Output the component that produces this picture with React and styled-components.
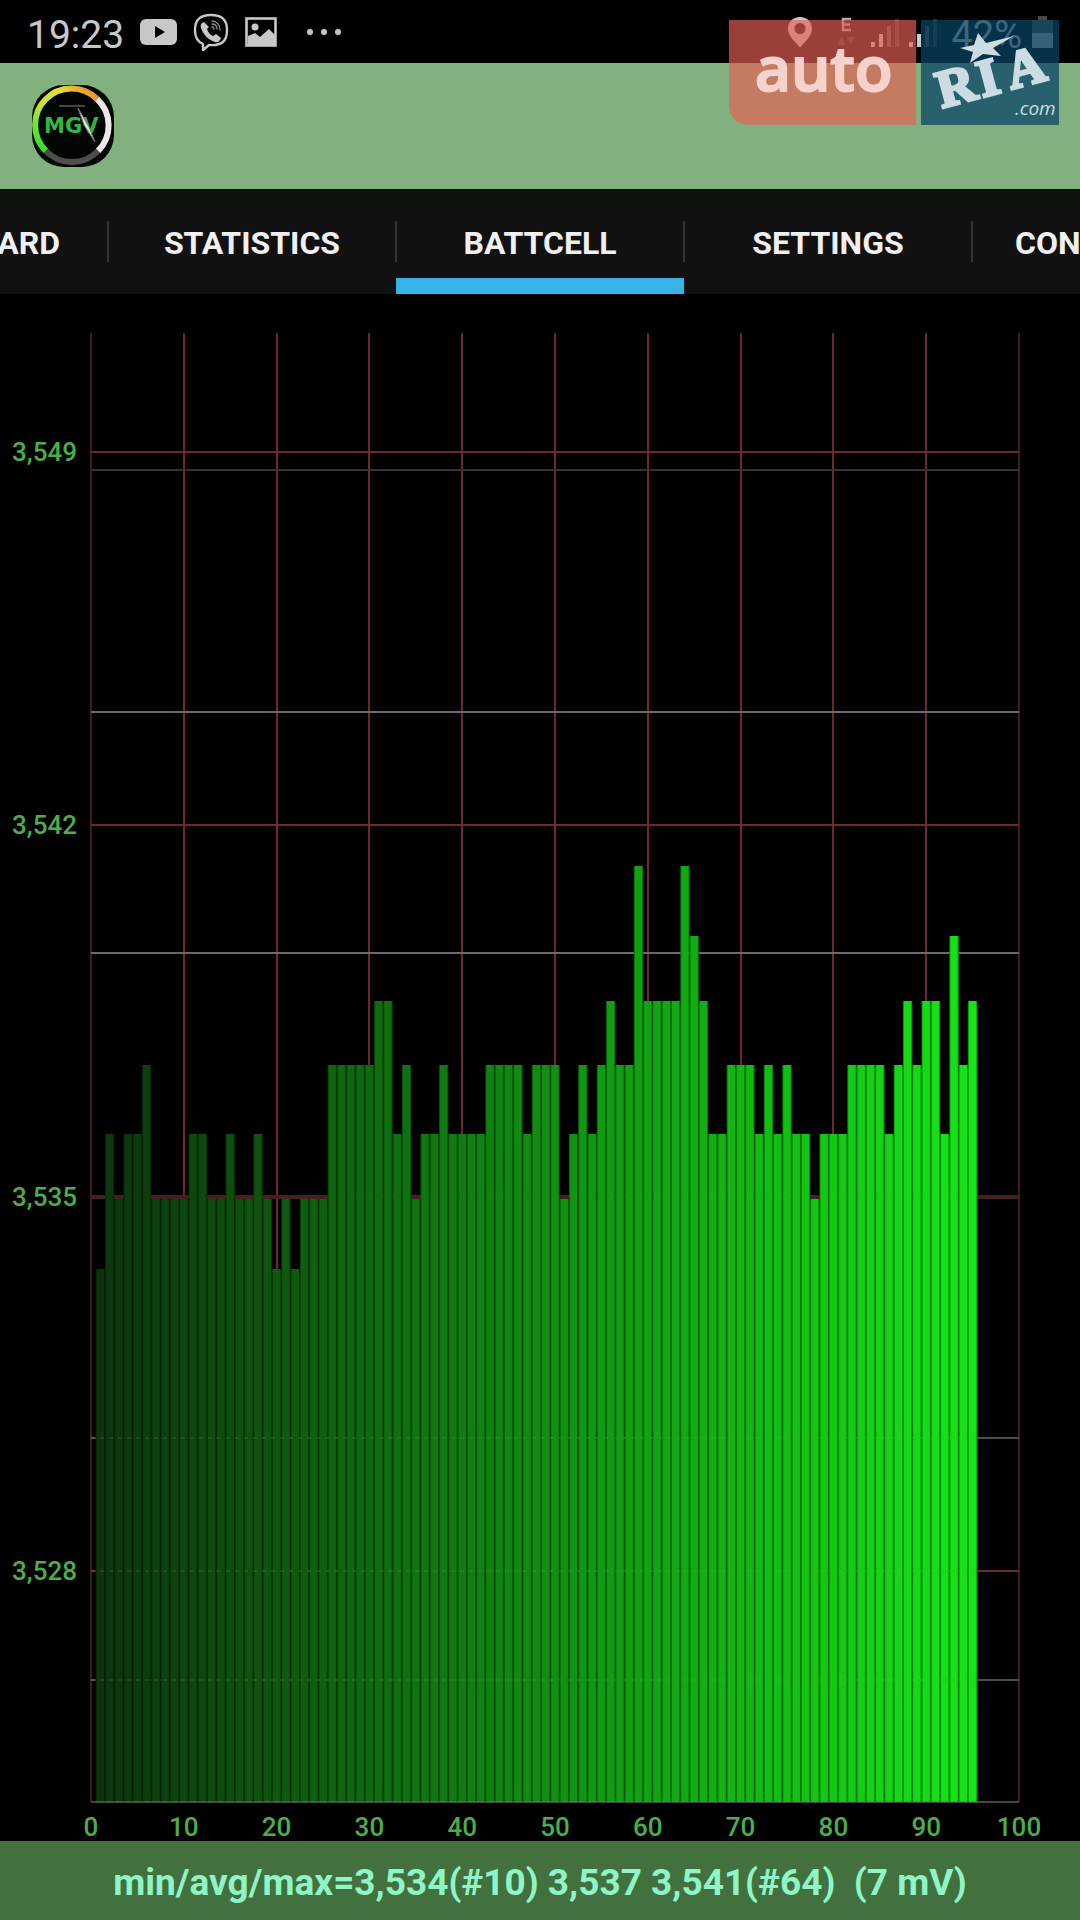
import React from 'react';
import styled, { createGlobalStyle } from 'styled-components';

//chart geometry, in viewBox units
const LEFT = 91;
const STEP = 9.28;
const RIGHT = LEFT + STEP * 100;
const TOP = 39;
const BOTTOM = 1508;

//top of a bar for each level, lowest first
const LEVELS = [975, 905, 840, 771, 707, 642, 572];

//level of every cell, ten to a line
const CELLS = (
  '0212231111' +
  '2211211210' +
  '1011133333' +
  '4423122322' +
  '2233332333' +
  '1232343364' +
  '4446542233' +
  '3232322122' +
  '2333323434' +
  '42534'
).split('').map(Number);

const RED_LINES = [
  { y: 158, label: '3,549' },
  { y: 531, label: '3,542' },
  { y: 903, label: '3,535', thick: true },
  { y: 1277, label: '3,528' },
];
const GREY_LINES = [
  { y: 176, color: '#333' },
  { y: 418, color: '#6a6a6a' },
  { y: 659, color: '#6a6a6a' },
  { y: 1144, color: '#4c4c4c' },
  { y: 1386, color: '#4c4c4c' },
];
const TENS = [0, 10, 20, 30, 40, 50, 60, 70, 80, 90, 100];

const App = () => {
  return (
    <>
      <GlobalStyle />
      <Screen>
        <StatusBar>
          <StatusGroup>
            <Clock>19:23</Clock>
            <VideoIcon />
            <CallIcon />
            <PictureIcon />
            <MoreIcon />
          </StatusGroup>
          <StatusGroup $tight>
            <PinIcon />
            <NetworkIcon />
            <SignalIcon />
            <SignalIcon />
            <Percent>42%</Percent>
            <BatteryIcon />
          </StatusGroup>
        </StatusBar>
        <Header>
          <AppLogo />
        </Header>
        <Tabs>
          <Tab $side="left">ARD</Tab>
          <Tab>STATISTICS</Tab>
          <Tab $active aria-current="page">BATTCELL</Tab>
          <Tab>SETTINGS</Tab>
          <Tab $side="right">CON</Tab>
        </Tabs>
        <CellChart />
        <Summary>min/avg/max=3,534(#10) 3,537 3,541(#64)  (7 mV)</Summary>
        <Watermark />
      </Screen>
    </>
  );
};

const CellChart = () => (
  <Chart viewBox="0 0 1080 1547" role="img" aria-label="Cell voltages">
    {TENS.map((n) => (
      <rect key={n} x={Math.round(LEFT + STEP * n) - 1} y={TOP} width="2" height={BOTTOM - TOP}
        fill={n === 0 || n === 100 ? '#431a1c' : '#6e2831'} />
    ))}
    {RED_LINES.map(({ y, thick }) => (
      <rect key={y} x={LEFT} y={thick ? y - 2 : y - 1} width={RIGHT - LEFT}
        height={thick ? 4 : 2} fill={thick ? '#452020' : '#6e2831'} />
    ))}
    {GREY_LINES.map(({ y, color }) => (
      <rect key={y} x={LEFT} y={y - 1} width={RIGHT - LEFT} height="2" fill={color} />
    ))}
    {CELLS.map((level, i) => {
      const x = LEFT + STEP * (i + 0.5);
      const y = LEVELS[level];
      const green = Math.round(52 + i * 1.88);
      const red = Math.round(12 + i * 0.1);
      return (
        <g key={i}>
          <rect x={x} y={y} width={STEP} height={BOTTOM - y}
            fill={`rgb(${Math.round(red / 3)}, ${Math.round(green * 0.68)}, 4)`} />
          <rect x={x + 1} y={y} width={STEP - 2} height={BOTTOM - y}
            fill={`rgb(${red}, ${green}, ${red + 2})`} />
        </g>
      );
    })}
    {[1144, 1277, 1386].map((y) => (
      <line key={y} x1={LEFT} x2={LEFT + STEP * 95.5} y1={y} y2={y}
        stroke="#5a9a5a" strokeOpacity="0.2" strokeWidth="2" strokeDasharray="4 5" />
    ))}
    <rect x={LEFT} y={BOTTOM - 1} width={RIGHT - LEFT} height="2" fill="#6a7a6a" fillOpacity="0.6" />
    {RED_LINES.map(({ y, label }) => (
      <AxisLabel key={label} x="77" y={y + 9} textAnchor="end">{label}</AxisLabel>
    ))}
    {TENS.map((n) => (
      <AxisLabel key={n} x={LEFT + STEP * n} y="1542" textAnchor="middle">{n}</AxisLabel>
    ))}
  </Chart>
);

const VideoIcon = () => (
  <svg width="37" height="28" viewBox="0 0 37 28">
    <rect y="1" width="37" height="26" rx="6" fill="#c8c8c8" />
    <path d="M15 8l10 6-10 6z" fill="#000" />
  </svg>
);

const CallIcon = () => (
  <svg width="36" height="38" viewBox="0 0 36 38" fill="none" stroke="#c8c8c8">
    <path strokeWidth="2.4" strokeLinejoin="round"
      d="M18 2C8 2 2 6 2 17c0 8 3 12 8 14v6l6-5c13 1 18-4 18-15C34 6 28 2 18 2z" />
    <path fill="#c8c8c8" stroke="none"
      d="M11 9c-3 1-4 3-3 6 2 6 7 12 14 14 3 1 5-1 6-4l-5-4-3 2c-3-1-5-4-6-7l2-2z" />
    <path strokeWidth="1.3" strokeLinecap="round" strokeOpacity="0.7"
      d="M19 8c5 0 8 4 8 9M19 11c3 0 5 2 5 5M19 14c1 0 2 1 2 2" />
  </svg>
);

const PictureIcon = () => (
  <svg width="32" height="30" viewBox="0 0 32 30">
    <rect x="1.5" y="1.5" width="29" height="27" fill="none" stroke="#c8c8c8" strokeWidth="2.6" />
    <circle cx="10" cy="10" r="3.5" fill="#c8c8c8" />
    <path d="M3 19l7-3 5 4 9-8 6 6v10H3z" fill="#c8c8c8" />
  </svg>
);

const MoreIcon = () => (
  <svg width="64" height="8" viewBox="0 0 64 8" fill="#c8c8c8">
    <circle cx="17" cy="4" r="3" />
    <circle cx="31" cy="4" r="3" />
    <circle cx="45" cy="4" r="3" />
  </svg>
);

const PinIcon = () => (
  <svg width="34" height="32" viewBox="0 0 34 32">
    <path fill="#c8c8c8" fillRule="evenodd"
      d="M13 1C6 1 1 6 1 12.500c0 8 8 14 12 19 4-5 12-11 12-19C25 6 20 1 13 1zm0 6a5 5 0 1 1 0 11 5 5 0 0 1 0-11z" />
  </svg>
);

const NetworkIcon = () => (
  <svg width="30" height="32" viewBox="0 0 30 32">
    <path d="M20 3h-8v11h8M12 8.500h7" fill="none" stroke="#aaa" strokeWidth="2.500" />
    <path d="M6 29l5-9 3 9zM16 21h8l-4 8z" fill="#2c2c2c" />
  </svg>
);

const SignalIcon = () => (
  <svg width="28" height="32" viewBox="0 0 28 32">
    <rect y="26" width="4" height="5" fill="#c8c8c8" />
    <rect x="8" y="18" width="4" height="13" fill="#c8c8c8" />
    <rect x="16" y="10" width="4" height="21" fill="#484848" />
    <rect x="24" y="3" width="4" height="28" fill="#303030" />
  </svg>
);

const BatteryIcon = () => (
  <svg width="21" height="32" viewBox="0 0 21 32">
    <path d="M6 0h9v4h6v14H0V4h6z" fill="#484848" />
    <rect y="17" width="21" height="15" fill="#b0b0b0" />
  </svg>
);

const AppLogo = () => (
  <svg width="82" height="82" viewBox="0 0 82 82" role="img" aria-label="MGV">
    <defs>
      <linearGradient id="dial" gradientUnits="userSpaceOnUse" x1="10" y1="66" x2="62" y2="10">
        <stop offset="0" stopColor="#2fe02f" />
        <stop offset="0.4" stopColor="#c0e23a" />
        <stop offset="0.75" stopColor="#e8dc3a" />
        <stop offset="1" stopColor="#e8962e" />
      </linearGradient>
    </defs>
    <rect width="82" height="82" rx="32" fill="#020602" />
    <g fill="none" strokeWidth="6">
      <path d="M14 66A36 36 0 0 1 65 14" stroke="url(#dial)" />
      <path d="M65 14A36 36 0 0 1 66 66" stroke="#ece8ea" />
      <path d="M66 66A36 36 0 0 1 14 66" stroke="#4e4e4e" />
    </g>
    <path d="M27 21h26" stroke="#444" strokeWidth="2" />
    <text x="12" y="48" fontFamily="DejaVu Sans" fontWeight="700" fontSize="21" fill="#32b840">MGV</text>
    <path d="M46 23l11 19 6 15-11-17z" fill="#d8e8dc" stroke="#777" strokeWidth="1" />
  </svg>
);

const Watermark = () => (
  <WatermarkBox viewBox="0 0 330 105" role="img" aria-label="auto RIA.com">
    <path d="M0 0h187v105H22Q0 105 0 83z" fill="#e65f53" fillOpacity="0.67" />
    <rect x="192" width="138" height="105" fill="#074364" fillOpacity="0.73" />
    <text x="26" y="71" fontFamily="Open Sans" fontWeight="600" fontSize="62"
      fill="#f6d2cd" stroke="#f6d2cd" strokeWidth="2">auto</text>
    <g transform="translate(213 88) rotate(-15)">
      <text x="0 42 72" y="0" fontFamily="Liberation Serif" fontWeight="700" fontSize="53"
        fill="#cbdce4" stroke="#cbdce4" strokeWidth="3">RIA</text>
    </g>
    <path d="M249 13l8 10 28-7-21 12 8 8-18-2-13 9 3-11-13-4 14-3z" fill="#cbdce4" />
    <text x="286" y="95" fontFamily="Open Sans" fontStyle="italic" fontSize="19" fill="#cbdce4">.com</text>
  </WatermarkBox>
);

const GlobalStyle = createGlobalStyle`
  * {
    box-sizing: border-box;
  }
  body {
    margin: 0;
    background: #000;
    font-family: Roboto, sans-serif;
  }
`;

const Screen = styled.main`
  position: relative;
  display: flex;
  flex-direction: column;
  min-height: 100vh;
  overflow: hidden;
`;

const StatusBar = styled.div`
  display: flex;
  align-items: center;
  justify-content: space-between;
  height: 63px;
  padding: 0 27px;
  color: #c8c8c8;
  svg {
    flex: none;
  }
`;

const StatusGroup = styled.div`
  display: flex;
  align-items: center;
  gap: ${({ $tight }) => ($tight ? '10px' : '16px')};
`;

const Clock = styled.time`
  font-size: 39px;
  line-height: 44px;
  padding-top: 6px;
`;

const Percent = styled.span`
  font-size: 38px;
  line-height: 44px;
  padding: 6px 0 0 4px;
`;

const Header = styled.header`
  display: flex;
  align-items: center;
  height: 126px;
  padding: 0 32px;
  background: #82b17f;
`;

const Tabs = styled.nav`
  display: grid;
  grid-template-columns: minmax(0, 3fr) repeat(3, minmax(0, 8fr)) minmax(0, 3fr);
  height: 105px;
  background: linear-gradient(#0c120c, #111 20px);
`;

const Tab = styled.button`
  position: relative;
  display: flex;
  align-items: center;
  justify-content: ${({ $side }) => ($side ? ($side === 'left' ? 'flex-end' : 'flex-start') : 'center')};
  padding: 0;
  padding-right: ${({ $side }) => $side === 'left' && '48px'};
  padding-left: ${({ $side }) => $side === 'right' && '43px'};
  border: 0;
  border-top: 18px solid transparent;
  border-bottom: 16px solid ${({ $active }) => ($active ? '#36b4ea' : 'transparent')};
  background: transparent;
  color: #f0f0f0;
  font: 700 32px/36px Roboto, sans-serif;
  white-space: nowrap;
  &:not(:first-child)::before {
    content: '';
    position: absolute;
    left: -1px;
    top: 14px;
    width: 2px;
    height: 41px;
    background: #333;
  }
`;

const Chart = styled.svg`
  display: block;
  flex: 1;
  width: 100%;
`;

const AxisLabel = styled.text`
  fill: #4aae4a;
  font: 500 26px Roboto, sans-serif;
`;

const Summary = styled.footer`
  height: 79px;
  background: #42703f;
  color: #8ef5c6;
  font-weight: 700;
  font-size: 37px;
  line-height: 84px;
  text-align: center;
  white-space: pre;
`;

const WatermarkBox = styled.svg`
  position: absolute;
  top: 20px;
  right: 21px;
  width: 330px;
`;

export default App;
